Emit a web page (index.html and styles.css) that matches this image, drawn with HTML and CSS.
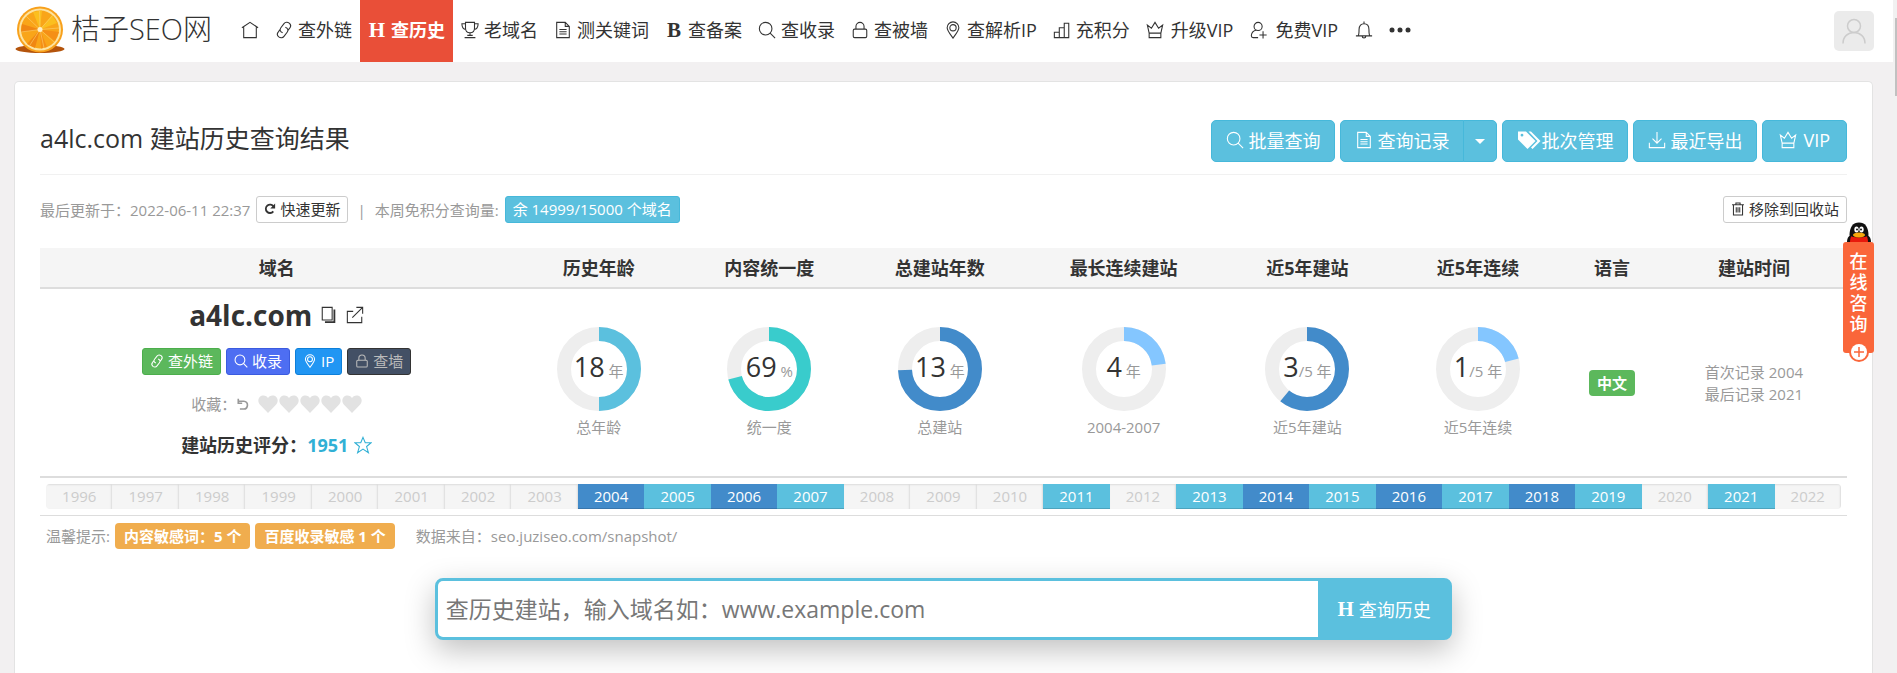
FILE: index.html
```html
<!DOCTYPE html>
<html lang="zh-CN">
<head>
    <meta charset="UTF-8">
    <meta name="viewport" content="width=device-width, initial-scale=1.0">
    <title>a4lc.com 建站历史查询结果</title>
    <link rel="stylesheet" href="styles.css">
</head>
<body>
    <!-- icon set -->
    <svg class="sprite" xmlns="http://www.w3.org/2000/svg">
        <symbol id="i-home" viewBox="0 0 20 20"><path d="M1 7.5 10 1.5l9 6M3 7v11.5h14V7"/></symbol>
        <symbol id="i-link" viewBox="0 0 20 20"><path d="M8.500 13C5.500 12 5 9.500 6.500 7.500l3.500-4.500c1.500-2 4-2 5.800-.6 1.800 1.500 2 3.800.5 5.600L14 11M11.500 7c3 1 3.500 3.500 2 5.500L10 17c-1.500 2-4 2-5.800.6-1.800-1.500-2-3.800-.5-5.600L6 9"/></symbol>
        <symbol id="i-cup" viewBox="0 0 20 20"><path d="M5 1.500h10V8c0 3-2 5-5 5S5 11 5 8zM5 3H1c0 4 1.500 6 4.500 6.500M15 3h4c0 4-1.500 6-4.500 6.500M10 13v3M7 16h6M4 18.500h12"/></symbol>
        <symbol id="i-doc" viewBox="0 0 20 20"><path d="M3 1.500h9.500L17 6v12.500H3zM12.500 1.500V6H17M6 9.500h8M6 12h8M6 14.500h8"/></symbol>
        <symbol id="i-search" viewBox="0 0 20 20"><circle cx="8.500" cy="8.500" r="7"/><path d="m13.500 13.500 5.500 5.500"/></symbol>
        <symbol id="i-lock" viewBox="0 0 20 20"><rect x="2.500" y="9" width="15" height="9.500" rx="1.500"/><path d="M5.500 9V6a4.500 4.500 0 0 1 9 0v3"/></symbol>
        <symbol id="i-pin" viewBox="0 0 20 20"><path d="M10 19C6 13.500 3.500 10.500 3.500 7.500a6.500 6.500 0 0 1 13 0c0 3-2.500 6-6.500 11.500z"/><circle cx="10" cy="7.500" r="3.500"/></symbol>
        <symbol id="i-chart" viewBox="0 0 20 20"><path d="M1.500 18.500v-6H7v6zM7 18.500v-11h5.500M12.500 18.500v-16h5v16zM1.500 18.500h16"/></symbol>
        <symbol id="i-crown" viewBox="0 0 20 20"><path d="M3.500 13.500 1.500 4.500 6 8l4-6.500L14 8l4.500-3.500-2 9zM3.500 13.500v5h13v-5"/></symbol>
        <symbol id="i-user-add" viewBox="0 0 20 20"><circle cx="9" cy="6" r="4.500"/><path d="M7 10c-3.500 1-5.500 3.500-5.500 6.500 0 1.500.8 2 2 2H9M14.500 11.500v8M10.500 15.500h8"/></symbol>
        <symbol id="i-bell" viewBox="0 0 20 20"><path d="M1 16.500h18M3.500 16.500c1-1.500 1-3 1-7C4.500 5 7 3 10 3s5.500 2 5.500 6.500c0 4 0 5.500 1 7M10 3V.5M8 17c0 2.500 4 2.500 4 0"/></symbol>
        <symbol id="i-user" viewBox="0 0 30 30"><circle cx="15" cy="10" r="6.500"/><path d="M4 27.500c0-7 5-11 11-11s11 4 11 11"/></symbol>
        <symbol id="i-download" viewBox="0 0 20 20"><path d="M10 1v12M5 8.500l5 5 5-5M1.500 13v5.500h17V13"/></symbol>
        <symbol id="i-trash" viewBox="0 0 20 20"><path d="M1.500 4h17M7 4V1.500h6V4M3.500 4v14.500h13V4M7.500 7.500V15M10 7.500V15M12.500 7.500V15"/></symbol>
        <symbol id="i-copy" viewBox="0 0 20 20"><path d="M2.500 1.500h11v14h-11z"/><path d="M5.500 18h10.500V4" stroke-width="2"/></symbol>
        <symbol id="i-open" viewBox="0 0 20 20"><path d="M8 6H1.500v12.500h16V12M7 13 18.500 1.500M11.500 1.500h7v7"/></symbol>
        <symbol id="i-star" viewBox="0 0 20 20"><path d="m10 1.500 2.500 6h6.500l-5 4.200 2 6.800-6-4-6 4 2-6.800-5-4.200h6.500z"/></symbol>
        <symbol id="i-heart" viewBox="0 0 20 20"><path d="M10 19 1.800 10.500C-.8 7.500.2 3 3.500 1.800 6.300.8 9 2 10 4.200 11 2 13.700.8 16.500 1.800c3.300 1.200 4.300 5.700 1.700 8.700z"/></symbol>
        <symbol id="i-tags" viewBox="0 0 24 20"><path d="M1 1.500h8l9.500 9.500-8 8L1 9.500zM5 3.800a1.400 1.400 0 1 0 0 2.800 1.400 1.400 0 0 0 0-2.800zM11.500 1.500h2.500l9.500 9.500-8 8-1.500-1.500 6.500-6.500z" fill-rule="evenodd"/></symbol>
        <symbol id="i-refresh" viewBox="0 0 20 20"><path d="M15.500 14a7 7 0 1 1 .5-8"/><path class="solid" d="M18.500 1v8h-8z"/></symbol>
        <symbol id="i-undo" viewBox="0 0 20 20"><path d="M4 5h8c8 0 7 12 0 12H6"/><path d="M3.500 1v7h6"/></symbol>
    </svg>

    <header class="navbar">
        <a href="#" class="logo">
            <svg class="logo-mark" viewBox="0 0 50 48">
                <ellipse cx="25" cy="43" rx="24.500" ry="4" fill="#b4540c"/>
                <circle cx="25" cy="23.500" r="23" fill="#f8a11c"/>
                <circle cx="25" cy="23.500" r="21" fill="#fde3a0"/>
                <circle cx="25" cy="23.500" r="19" fill="#f9a519"/>
                <path d="M25 23.500 18 6l9-1.500zM25 23.500 37 9l5 8z" fill="#fbbf1f"/>
                <path d="M25 23.500 7 18l-1 8zM25 23.500 12 38l8 4z" fill="#f08713"/>
                <path d="M25 23.500 44 26l-4 9zM25 23.500 32 41l-6 1.500z" fill="#f58f16"/>
                <path d="M25 23.500 11 10M25 23.500 24.500 5M25 23.500 38 9M25 23.500 44 22M25 23.500 39 36M25 23.500 29 42M25 23.500 15 39M25 23.500 6 26" stroke="#fcd070" stroke-width=".6" fill="none"/>
                <circle cx="25" cy="23.500" r="2.500" fill="#fff0c8"/>
            </svg>
            <span class="logo-text">桔子SEO网</span>
        </a>
        <nav class="nav">
            <a href="#" class="nav-item" aria-label="首页"><svg class="icon"><use href="#i-home"/></svg></a>
            <a href="#" class="nav-item"><svg class="icon"><use href="#i-link"/></svg>查外链</a>
            <a href="#" class="nav-item active"><b class="letter">H</b>查历史</a>
            <a href="#" class="nav-item"><svg class="icon"><use href="#i-cup"/></svg>老域名</a>
            <a href="#" class="nav-item"><svg class="icon"><use href="#i-doc"/></svg>测关键词</a>
            <a href="#" class="nav-item"><b class="letter">B</b>查备案</a>
            <a href="#" class="nav-item"><svg class="icon"><use href="#i-search"/></svg>查收录</a>
            <a href="#" class="nav-item"><svg class="icon"><use href="#i-lock"/></svg>查被墙</a>
            <a href="#" class="nav-item"><svg class="icon"><use href="#i-pin"/></svg>查解析IP</a>
            <a href="#" class="nav-item"><svg class="icon"><use href="#i-chart"/></svg>充积分</a>
            <a href="#" class="nav-item vip"><svg class="icon"><use href="#i-crown"/></svg>升级VIP</a>
            <a href="#" class="nav-item vip"><svg class="icon"><use href="#i-user-add"/></svg>免费VIP</a>
            <a href="#" class="nav-item" aria-label="通知"><svg class="icon"><use href="#i-bell"/></svg></a>
            <a href="#" class="nav-item" aria-label="更多"><svg class="dots" viewBox="0 0 22 6"><circle cx="3" cy="3" r="2.500"/><circle cx="11" cy="3" r="2.500"/><circle cx="19" cy="3" r="2.500"/></svg></a>
        </nav>
        <a href="#" class="avatar" aria-label="用户"><svg><use href="#i-user"/></svg></a>
    </header>

    <main class="page">
        <section class="card">
            <div class="title-bar">
                <h1>a4lc.com 建站历史查询结果</h1>
                <div class="actions">
                    <button type="button" class="btn btn-info"><svg class="icon"><use href="#i-search"/></svg>批量查询</button>
                    <div class="btn-group">
                        <button type="button" class="btn btn-info"><svg class="icon"><use href="#i-doc"/></svg>查询记录</button>
                        <button type="button" class="btn btn-info btn-caret" aria-label="展开"><span class="caret"></span></button>
                    </div>
                    <button type="button" class="btn btn-info btn-tags"><svg class="icon-tags"><use href="#i-tags"/></svg>批次管理</button>
                    <button type="button" class="btn btn-info"><svg class="icon"><use href="#i-download"/></svg>最近导出</button>
                    <button type="button" class="btn btn-info btn-vip"><svg class="icon"><use href="#i-crown"/></svg>VIP</button>
                </div>
            </div>

            <div class="info-bar">
                <span>最后更新于：2022-06-11 22:37</span>
                <button type="button" class="btn-sm btn-default"><svg class="icon bold"><use href="#i-refresh"/></svg>快速更新</button>
                <span class="divider">|</span>
                <span>本周免积分查询量:</span>
                <button type="button" class="btn-sm btn-info">余 14999/15000 个域名</button>
                <button type="button" class="btn-sm btn-default btn-right"><svg class="icon"><use href="#i-trash"/></svg>移除到回收站</button>
            </div>

            <table class="result">
                <thead>
                    <tr>
                        <th class="w-domain">域名</th>
                        <th class="w-chart">历史年龄</th>
                        <th class="w-chart">内容统一度</th>
                        <th class="w-chart">总建站年数</th>
                        <th class="w-long">最长连续建站</th>
                        <th class="w-chart">近5年建站</th>
                        <th class="w-chart">近5年连续</th>
                        <th class="w-lang">语言</th>
                        <th class="w-time">建站时间</th>
                    </tr>
                </thead>
                <tbody>
                    <tr class="row-main">
                        <td class="domain">
                            <div class="domain-name">a4lc.com
                                <a href="#" aria-label="复制"><svg class="icon"><use href="#i-copy"/></svg></a>
                                <a href="#" aria-label="打开"><svg class="icon"><use href="#i-open"/></svg></a>
                            </div>
                            <div class="domain-links">
                                <a href="#" class="btn-sm btn-green"><svg class="icon"><use href="#i-link"/></svg>查外链</a>
                                <a href="#" class="btn-sm btn-blue"><svg class="icon"><use href="#i-search"/></svg>收录</a>
                                <a href="#" class="btn-sm btn-sky"><svg class="icon"><use href="#i-pin"/></svg>IP</a>
                                <a href="#" class="btn-sm btn-dark"><svg class="icon"><use href="#i-lock"/></svg>查墙</a>
                            </div>
                            <div class="favorite">收藏：
                                <svg class="undo"><use href="#i-undo"/></svg>
                                <span class="hearts">
                                    <svg><use href="#i-heart"/></svg>
                                    <svg><use href="#i-heart"/></svg>
                                    <svg><use href="#i-heart"/></svg>
                                    <svg><use href="#i-heart"/></svg>
                                    <svg><use href="#i-heart"/></svg>
                                </span>
                            </div>
                            <div class="score">建站历史评分：<a href="#">1951<svg class="icon"><use href="#i-star"/></svg></a></div>
                        </td>
                        <td>
                            <div class="donut">
                                <svg viewBox="0 0 84 84"><circle class="track" cx="42" cy="42" r="35"/><circle class="arc c-info" cx="42" cy="42" r="35" pathLength="100" stroke-dasharray="50 50"/></svg>
                                <span class="value"><span class="num">18</span> 年</span>
                            </div>
                            <div class="caption">总年龄</div>
                        </td>
                        <td>
                            <div class="donut">
                                <svg viewBox="0 0 84 84"><circle class="track" cx="42" cy="42" r="35"/><circle class="arc c-teal" cx="42" cy="42" r="35" pathLength="100" stroke-dasharray="71 29"/></svg>
                                <span class="value"><span class="num">69</span> %</span>
                            </div>
                            <div class="caption">统一度</div>
                        </td>
                        <td>
                            <div class="donut">
                                <svg viewBox="0 0 84 84"><circle class="track" cx="42" cy="42" r="35"/><circle class="arc c-blue" cx="42" cy="42" r="35" pathLength="100" stroke-dasharray="74.5 25.5"/></svg>
                                <span class="value"><span class="num">13</span> 年</span>
                            </div>
                            <div class="caption">总建站</div>
                        </td>
                        <td>
                            <div class="donut">
                                <svg viewBox="0 0 84 84"><circle class="track" cx="42" cy="42" r="35"/><circle class="arc c-light" cx="42" cy="42" r="35" pathLength="100" stroke-dasharray="23 77"/></svg>
                                <span class="value"><span class="num">4</span> 年</span>
                            </div>
                            <div class="caption">2004-2007</div>
                        </td>
                        <td>
                            <div class="donut">
                                <svg viewBox="0 0 84 84"><circle class="track" cx="42" cy="42" r="35"/><circle class="arc c-blue" cx="42" cy="42" r="35" pathLength="100" stroke-dasharray="61 39"/></svg>
                                <span class="value"><span class="num">3</span>/5 年</span>
                            </div>
                            <div class="caption">近5年建站</div>
                        </td>
                        <td>
                            <div class="donut">
                                <svg viewBox="0 0 84 84"><circle class="track" cx="42" cy="42" r="35"/><circle class="arc c-light" cx="42" cy="42" r="35" pathLength="100" stroke-dasharray="21 79"/></svg>
                                <span class="value"><span class="num">1</span>/5 年</span>
                            </div>
                            <div class="caption">近5年连续</div>
                        </td>
                        <td><span class="label label-green">中文</span></td>
                        <td class="time">首次记录 2004<br>最后记录 2021</td>
                    </tr>
                    <tr class="row-years">
                        <td colspan="9">
                            <div class="years">
                                <span>1996</span><span>1997</span><span>1998</span><span>1999</span><span>2000</span><span>2001</span><span>2002</span><span>2003</span>
                                <span class="on-blue">2004</span><span class="on-info">2005</span><span class="on-blue">2006</span><span class="on-info">2007</span>
                                <span>2008</span><span>2009</span><span>2010</span><span class="on-info">2011</span><span>2012</span>
                                <span class="on-info">2013</span><span class="on-blue">2014</span><span class="on-info">2015</span><span class="on-blue">2016</span><span class="on-info">2017</span><span class="on-blue">2018</span><span class="on-info">2019</span>
                                <span>2020</span><span class="on-info">2021</span><span>2022</span>
                            </div>
                        </td>
                    </tr>
                </tbody>
            </table>

            <div class="tips">
                <span>温馨提示:</span>
                <span class="label label-orange">内容敏感词：5 个</span>
                <span class="label label-orange">百度收录敏感 1 个</span>
                <span class="source">数据来自：seo.juziseo.com/snapshot/</span>
            </div>

            <form class="search">
                <input type="text" aria-label="域名" placeholder="查历史建站，输入域名如：www.example.com">
                <button type="submit"><b class="letter">H</b>查询历史</button>
            </form>
        </section>
    </main>

    <!-- floating customer service tab -->
    <a href="#" class="service">
        <svg class="penguin" viewBox="0 0 26 20">
            <path d="M1 20c0-5 3-7 4-7h16c1 0 4 2 4 7z" fill="#111"/>
            <path d="M4 20c0-3 1-6 2-7h14c1 1 2 4 2 7z" fill="#e8190c"/>
            <path d="M3.500 13.500C3.500 5 7 .5 13 .5S22.500 5 22.500 13.500c-3 2.500-16 2.500-19 0z" fill="#111"/>
            <ellipse cx="10.500" cy="7.500" rx="2.200" ry="3" fill="#fff"/>
            <ellipse cx="15.500" cy="7.500" rx="2.200" ry="3" fill="#fff"/>
            <circle cx="11" cy="7.500" r="1" fill="#111"/>
            <circle cx="15" cy="7.500" r="1" fill="#111"/>
            <ellipse cx="13" cy="13" rx="6" ry="2.500" fill="#f7a80c"/>
        </svg>
        <span class="service-text">在线咨询</span>
        <svg class="plus" viewBox="0 0 20 20"><circle cx="10" cy="10" r="10" fill="#fa663a"/><circle cx="10" cy="10" r="8" fill="#fff"/><path d="M10 5v10M5 10h10" stroke="#fa663a" stroke-width="1.500"/></svg>
    </a>
    <div class="scroll-track"><div class="scroll-thumb"></div></div>
</body>
</html>
```
FILE: styles.css
```css
* {
    margin: 0;
    padding: 0;
    box-sizing: border-box;
}

body {
    display: flex;
    flex-direction: column;
    min-height: 100vh;
    padding-right: 4px;
    background: #f2f0f1;
    color: #333;
    font-family: "Open Sans", "Noto Sans CJK SC", sans-serif;
    font-size: 15px;
    line-height: 22px;
}

a {
    color: inherit;
    text-decoration: none;
}

button,
input {
    font-family: inherit;
}

button {
    cursor: pointer;
}

.sprite {
    display: none;
}

.icon {
    width: 18px;
    height: 18px;
    flex: none;
    fill: none;
    stroke: currentColor;
    stroke-width: 1.2;
}

.icon.bold {
    stroke-width: 3;
}

.solid {
    fill: currentColor;
    stroke: none;
}

.letter {
    width: 18px;
    font-family: "Liberation Serif", serif;
    font-size: 21px;
    font-weight: 700;
    text-align: center;
}

/* header */
.navbar {
    display: flex;
    align-items: center;
    height: 62px;
    padding: 0 19px 0 15px;
    background: #fff;
}

.logo {
    display: flex;
    align-items: center;
    gap: 6px;
    width: 218px;
    padding-bottom: 2px;
}

.logo-mark {
    width: 50px;
    height: 48px;
}

.logo-text {
    padding-bottom: 2px;
    color: #333;
    font-size: 29px;
    font-weight: 300;
    white-space: nowrap;
}

.nav {
    display: flex;
    align-self: stretch;
}

.nav-item {
    display: flex;
    align-items: center;
    gap: 5px;
    padding: 0 8px 2px;
    font-size: 18px;
    white-space: nowrap;
}

.nav-item.active {
    background: #e94f38;
    color: #fff;
    font-weight: 700;
}

.nav-item.vip {
    gap: 7px;
    padding-right: 9px;
}

.dots {
    width: 22px;
    height: 6px;
    fill: #333;
}

.avatar {
    display: flex;
    align-items: center;
    justify-content: center;
    width: 40px;
    height: 40px;
    margin-left: auto;
    border-radius: 5px;
    background: #ebebeb;
}

.avatar svg {
    width: 30px;
    height: 30px;
    fill: none;
    stroke: #ccc;
    stroke-width: 1.5;
}

/* card */
.page {
    display: flex;
    flex: 1;
    padding: 19px 20px 0 14px;
}

.card {
    flex: 1;
    padding: 38px 25px 20px;
    border: 1px solid #e3e3e3;
    border-bottom: 0;
    border-radius: 5px 5px 0 0;
    background: #fff;
}

.title-bar {
    display: flex;
    align-items: flex-start;
    justify-content: space-between;
    padding-bottom: 12px;
    border-bottom: 1px solid #f1f1f1;
}

.title-bar h1 {
    font-size: 25px;
    font-weight: 400;
    line-height: 36px;
}

.actions {
    display: flex;
    gap: 5px;
}

.btn {
    display: flex;
    align-items: center;
    gap: 4px;
    height: 42px;
    padding: 0 14px 2px;
    border-radius: 5px;
    font-size: 18px;
}

.btn-info {
    border: 1px solid #46b8da;
    background: #5bc0de;
    color: #fff;
}

.btn-group {
    display: flex;
}

.btn-group .btn:first-child {
    border-radius: 5px 0 0 5px;
}

.btn-group .btn-caret {
    margin-left: -1px;
    padding: 0 11px;
    border-radius: 0 5px 5px 0;
}

.caret {
    border-top: 5px solid #fff;
    border-left: 5px solid transparent;
    border-right: 5px solid transparent;
}

.btn-tags {
    gap: 0;
}

.btn-vip {
    gap: 6px;
    padding: 0 16px 2px;
}

.icon-tags {
    width: 24px;
    height: 20px;
    fill: #fff;
}

/* update info */
.info-bar {
    display: flex;
    align-items: center;
    gap: 6px;
    padding: 21px 0 25px;
    color: #999;
}

.btn-sm {
    display: inline-flex;
    align-items: center;
    gap: 4px;
    height: 27px;
    padding: 0 7px 1px;
    border-radius: 3px;
    font-size: 15px;
    line-height: 22px;
}

.btn-sm .icon {
    width: 14px;
    height: 14px;
    stroke-width: 1.5;
}

.btn-sm .icon.bold {
    width: 12px;
    height: 12px;
    stroke-width: 3;
}

.btn-default {
    border: 1px solid #ccc;
    background: #fff;
    color: #333;
}

.btn-right {
    margin-left: auto;
}

.divider {
    padding: 0 3px;
}

/* result table */
.result {
    width: 100%;
    border-collapse: collapse;
    table-layout: fixed;
}

.w-domain { width: 26.2%; }
.w-long { width: 10.9%; }
.w-lang { width: 5.4%; }
.w-time { width: 10.3%; }

.result th {
    height: 40px;
    border-bottom: 2px solid #ddd;
    background: #f5f5f5;
    font-size: 18px;
    font-weight: 700;
}

.result td {
    padding: 8px;
    text-align: center;
    vertical-align: middle;
}

.result .domain {
    padding: 8px 8px 16px;
}

.domain-name,
.domain-links,
.favorite,
.score {
    display: flex;
    align-items: center;
    justify-content: center;
}

.domain-name {
    gap: 8px;
    height: 38px;
    margin-bottom: 13px;
    padding-bottom: 3px;
    font-size: 28px;
    font-weight: 700;
}

.domain-name a {
    display: flex;
}

.domain-links {
    gap: 5px;
    margin-bottom: 14px;
}

.btn-green {
    border: 1px solid #4cae4c;
    background: #5cb85c;
    color: #fff;
}

.btn-blue {
    border: 1px solid #3b5bdf;
    background: #4e6ef2;
    color: #fff;
}

.btn-sky {
    border: 1px solid #0d7fd9;
    background: #2196f3;
    color: #fff;
}

.btn-dark {
    border: 1px solid #333;
    background: #435065;
    color: #bbb;
}

.favorite {
    height: 30px;
    margin-bottom: 11px;
    color: #999;
}

.undo {
    width: 13px;
    height: 13px;
    margin-right: 9px;
    fill: none;
    stroke: #999;
    stroke-width: 2.5;
}

.hearts {
    display: flex;
    gap: 1px;
}

.hearts svg {
    width: 20px;
    height: 20px;
    fill: #e2e2e2;
}

.score {
    height: 30px;
    font-size: 18px;
    font-weight: 700;
}

.score a {
    display: flex;
    align-items: center;
    gap: 6px;
    color: #31b0d5;
}

.donut {
    display: grid;
    place-items: center;
    height: 84px;
    margin-bottom: 5px;
}

.donut svg,
.donut .value {
    grid-area: 1 / 1;
}

.donut svg {
    width: 84px;
    height: 84px;
    transform: rotate(-90deg);
}

.track,
.arc {
    fill: none;
    stroke: #eee;
    stroke-width: 14;
}

.c-info { stroke: #5bc0de; }
.c-teal { stroke: #39cccc; }
.c-blue { stroke: #428bca; }
.c-light { stroke: #84c6ff; }

.value {
    z-index: 1;
    color: #999;
    white-space: nowrap;
}

.num {
    color: #333;
    font-size: 27px;
}

.caption,
.time {
    color: #999;
}

.label {
    display: inline-block;
    padding: 2px 8px;
    border-radius: 4px;
    color: #fff;
    font-weight: 700;
}

.label-green {
    background: #5cb85c;
}

.label-orange {
    padding: 2px 9px;
    background: #f0ad4e;
}

.result .row-years td {
    padding: 6px;
    border-top: 2px solid #ddd;
    border-bottom: 1px solid #ddd;
}

.years {
    display: grid;
    grid-template-columns: repeat(27, 1fr);
    height: 25px;
    overflow: hidden;
    border-radius: 4px;
    background: #f5f5f5;
    color: #ccc;
    line-height: 25px;
}

.years span {
    box-shadow: inset -1px 1px 2px rgba(0,0,0,0.1);
}

.years .on-blue,
.years .on-info {
    background: #428bca;
    box-shadow: inset 0 -1px 0 rgba(0,0,0,0.15);
    color: #fff;
}

.years .on-info {
    background: #5bc0de;
}

.tips {
    display: flex;
    align-items: center;
    gap: 5px;
    padding: 7px 6px 29px;
    color: #999;
}

.source {
    margin-left: 16px;
}

/* search box */
.search {
    display: flex;
    width: 56.3%;
    height: 62px;
    margin: 0 auto;
    border: 3px solid #5bc0de;
    border-radius: 8px;
    background: #5bc0de;
    box-shadow: 0 10px 30px rgba(0,0,0,0.25);
}

.search input {
    flex: 1;
    min-width: 0;
    padding: 0 8px;
    border: 0;
    border-radius: 5px 0 0 5px;
    background: #fff;
    color: #333;
    font-size: 23px;
    outline: none;
}

.search input::placeholder {
    color: #777;
}

.search button {
    display: flex;
    align-items: center;
    justify-content: center;
    gap: 4px;
    width: 131px;
    border: 0;
    background: #5bc0de;
    color: #fff;
    font-size: 18px;
}

/* floating tab */
.service {
    position: fixed;
    top: 222px;
    right: 23px;
    display: flex;
    flex-direction: column;
    align-items: center;
    width: 31px;
    color: #fff;
}

.penguin {
    width: 26px;
    height: 20px;
}

.service-text {
    width: 31px;
    padding: 9px 6px 18px;
    border-radius: 3px;
    background: #fa663a;
    font-size: 18px;
    font-weight: 500;
    line-height: 21px;
    text-align: center;
}

.plus {
    width: 20px;
    height: 20px;
    margin-top: -11px;
}

.scroll-track {
    position: fixed;
    top: 0;
    right: 0;
    width: 4px;
    height: 100%;
    padding: 18px 0 0 2px;
    background: #f1f1f1;
}

.scroll-thumb {
    height: 78px;
    background: #c1c1c1;
}
```
